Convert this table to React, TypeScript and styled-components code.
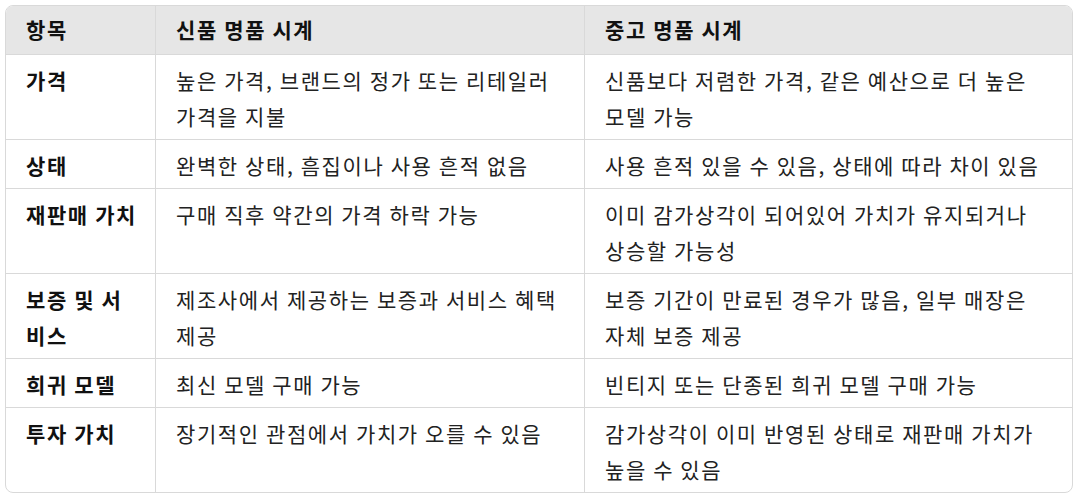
import React from "react";
import styled, { createGlobalStyle } from "styled-components";

const GlobalStyle = createGlobalStyle`
  html, body {
    margin: 0;
    padding: 0;
    background: #ffffff;
  }
  body {
    font-family: "Noto Sans CJK KR", "Noto Sans", sans-serif;
  }
`;

const Page = styled.div`
  padding: 5px 6px 0 5px;
`;

const Frame = styled.div`
  border: 1px solid #d9d9d9;
  border-radius: 8px;
  overflow: hidden;
`;

const Table = styled.table`
  width: 100%;
  border-collapse: separate;
  border-spacing: 0;
  table-layout: fixed;
  font-family: "Noto Sans CJK KR", "Noto Sans", sans-serif;
  font-size: 21px;
  line-height: 36px;
  letter-spacing: 1.6px;
  color: #1f1f1f;
`;

const HeadRow = styled.tr`
  background: #e6e6e6;
`;

const HeadCell = styled.th`
  text-align: left;
  font-weight: 700;
  color: #111111;
  padding: 5px 20px 7px 20px;
  border-bottom: 1px solid #d9d9d9;
  border-right: 1px solid #d9d9d9;
  &:first-child {
    padding-right: 14px;
  }
  &:last-child {
    border-right: none;
  }
`;

const Row = styled.tr<{ $last?: boolean }>`
  & > td {
    border-bottom: ${(p) => (p.$last ? "none" : "1px solid #d9d9d9")};
  }
`;

const Cell = styled.td<{ $label?: boolean }>`
  vertical-align: top;
  padding: 7px 20px 5px 20px;
  padding-right: ${(p) => (p.$label ? "14px" : "20px")};
  border-right: 1px solid #d9d9d9;
  font-weight: ${(p) => (p.$label ? 700 : 400)};
  color: ${(p) => (p.$label ? "#111111" : "#222222")};
  &:last-child {
    border-right: none;
  }
`;

const rows: [string, string, string][] = [
  ["가격", "높은 가격, 브랜드의 정가 또는 리테일러 가격을 지불", "신품보다 저렴한 가격, 같은 예산으로 더 높은 모델 가능"],
  ["상태", "완벽한 상태, 흠집이나 사용 흔적 없음", "사용 흔적 있을 수 있음, 상태에 따라 차이 있음"],
  ["재판매 가치", "구매 직후 약간의 가격 하락 가능", "이미 감가상각이 되어있어 가치가 유지되거나 상승할 가능성"],
  ["보증 및 서비스", "제조사에서 제공하는 보증과 서비스 혜택 제공", "보증 기간이 만료된 경우가 많음, 일부 매장은 자체 보증 제공"],
  ["희귀 모델", "최신 모델 구매 가능", "빈티지 또는 단종된 희귀 모델 구매 가능"],
  ["투자 가치", "장기적인 관점에서 가치가 오를 수 있음", "감가상각이 이미 반영된 상태로 재판매 가치가 높을 수 있음"],
];

export default function App() {
  return (
    <>
      <GlobalStyle />
      <Page>
        <Frame>
          <Table>
            <colgroup>
              <col style={{ width: 150 }} />
              <col style={{ width: 429 }} />
              <col />
            </colgroup>
            <thead>
              <HeadRow>
                <HeadCell>항목</HeadCell>
                <HeadCell>신품 명품 시계</HeadCell>
                <HeadCell>중고 명품 시계</HeadCell>
              </HeadRow>
            </thead>
            <tbody>
              {rows.map((r, i) => (
                <Row key={r[0]} $last={i === rows.length - 1}>
                  <Cell $label>{r[0]}</Cell>
                  <Cell>{r[1]}</Cell>
                  <Cell>{r[2]}</Cell>
                </Row>
              ))}
            </tbody>
          </Table>
        </Frame>
      </Page>
    </>
  );
}
